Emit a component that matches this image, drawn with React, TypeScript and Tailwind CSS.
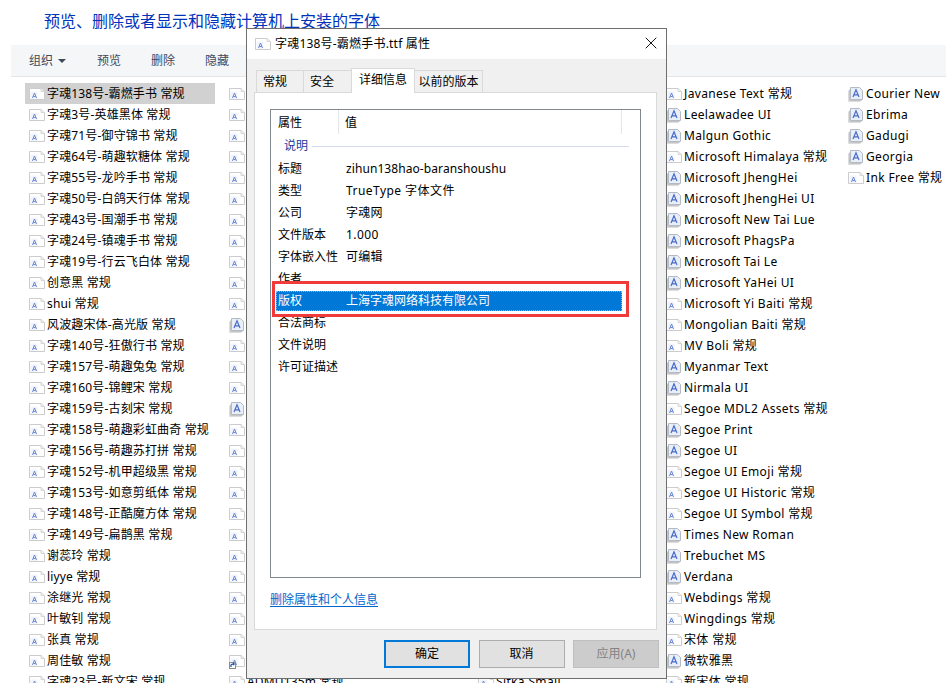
import { X } from "lucide-react";

type IconKind = "plain" | "stack" | "link" | "none";
type Item = { name: string; icon: IconKind; selected?: boolean };

const plain = (name: string): Item => ({ name, icon: "plain" });
const stack = (name: string): Item => ({ name, icon: "stack" });

const COL_ONE: Item[] = [
  { name: "字魂138号-霸燃手书 常规", icon: "plain", selected: true },
  ...[
    "字魂3号-英雄黑体 常规",
    "字魂71号-御守锦书 常规",
    "字魂64号-萌趣软糖体 常规",
    "字魂55号-龙吟手书 常规",
    "字魂50号-白鸽天行体 常规",
    "字魂43号-国潮手书 常规",
    "字魂24号-镇魂手书 常规",
    "字魂19号-行云飞白体 常规",
    "创意黑 常规",
    "shui 常规",
    "风波趣宋体-高光版 常规",
    "字魂140号-狂傲行书 常规",
    "字魂157号-萌趣兔兔 常规",
    "字魂160号-锦鲤宋 常规",
    "字魂159号-古刻宋 常规",
    "字魂158号-萌趣彩虹曲奇 常规",
    "字魂156号-萌趣苏打拼 常规",
    "字魂152号-机甲超级黑 常规",
    "字魂153号-如意剪纸体 常规",
    "字魂148号-正酷魔方体 常规",
    "字魂149号-扁鹊黑 常规",
    "谢蕊玲 常规",
    "liyye 常规",
    "涂继光 常规",
    "叶敏钊 常规",
    "张真 常规",
    "周佳敏 常规",
    "字魂23号-新文宋 常规",
  ].map(plain),
];

// second column sits behind the dialog, only its icons and last row show
const STACKED_COL_TWO = [11, 15];
const COL_TWO: Item[] = Array.from({ length: 29 }, (_, i) => {
  if (i === 27) return { name: "", icon: "link" as IconKind };
  if (i === 28) return plain("ADMU135m 常规");
  return { name: "", icon: STACKED_COL_TWO.includes(i) ? "stack" : "plain" };
});

const COL_THREE: Item[] = [
  plain("Javanese Text 常规"),
  stack("Leelawadee UI"),
  stack("Malgun Gothic"),
  plain("Microsoft Himalaya 常规"),
  stack("Microsoft JhengHei"),
  stack("Microsoft JhengHei UI"),
  stack("Microsoft New Tai Lue"),
  stack("Microsoft PhagsPa"),
  stack("Microsoft Tai Le"),
  stack("Microsoft YaHei UI"),
  plain("Microsoft Yi Baiti 常规"),
  plain("Mongolian Baiti 常规"),
  plain("MV Boli 常规"),
  stack("Myanmar Text"),
  stack("Nirmala UI"),
  plain("Segoe MDL2 Assets 常规"),
  stack("Segoe Print"),
  stack("Segoe UI"),
  plain("Segoe UI Emoji 常规"),
  plain("Segoe UI Historic 常规"),
  plain("Segoe UI Symbol 常规"),
  stack("Times New Roman"),
  stack("Trebuchet MS"),
  stack("Verdana"),
  plain("Webdings 常规"),
  plain("Wingdings 常规"),
  plain("宋体 常规"),
  stack("微软雅黑"),
  plain("新宋体 常规"),
];

const COL_FOUR: Item[] = [
  stack("Courier New"),
  stack("Ebrima"),
  stack("Gadugi"),
  stack("Georgia"),
  plain("Ink Free 常规"),
];

const PROPS = [
  { key: "标题", value: "zihun138hao-baranshoushu", tracking: "tracking-[0.08px]" },
  { key: "类型", value: "TrueType 字体文件", tracking: "tracking-[0.45px]" },
  { key: "公司", value: "字魂网", tracking: "tracking-[0.3px]" },
  { key: "文件版本", value: "1.000", tracking: "tracking-[0.45px]" },
  { key: "字体嵌入性", value: "可编辑", tracking: "tracking-[0.3px]" },
  { key: "作者", value: "", tracking: "" },
  { key: "版权", value: "上海字魂网络科技有限公司", tracking: "tracking-normal" },
  { key: "合法商标", value: "", tracking: "" },
  { key: "文件说明", value: "", tracking: "" },
  { key: "许可证描述", value: "", tracking: "" },
];

const FontIcon = ({ kind }: { kind: IconKind }) => {
  if (kind === "none") return <span className="w-4 h-4 shrink-0" />;
  if (kind === "stack") {
    return (
      <svg width="16" height="16" viewBox="0 0 16 16" className="shrink-0">
        <path d="M1.500 3.500v11h12" fill="none" stroke="#c4c4c4" />
        <path d="M0.500 4.500v11h12" fill="none" stroke="#dcdcdc" />
        <path d="M2.500 1.500h9l3 3v9h-12z" fill="#e8eff9" stroke="#b3bac4" />
        <path d="M5 11 L8 3.800 L11 11 M6.200 8.800h3.600" fill="none" stroke="#4a6ac8" strokeWidth="1.200" />
      </svg>
    );
  }
  return (
    <svg width="16" height="16" viewBox="0 0 16 16" className="shrink-0">
      <path d="M0.500 2.500h11.500l3.500 3v8h-15z" fill="#ffffff" stroke="#cccccc" />
      <path d="M12 2.500v3h3.500" fill="#f0f0f0" stroke="#d6d6d6" />
      <path d="M1.500 13h7V5.500h-7z" fill="#f0f4fb" />
      <path d="M3.500 12 L5.500 7 L7.500 12 M4.300 10.500h2.400" fill="none" stroke="#6d86d6" strokeWidth="1" />
      {kind === "link" && (
        <g>
          <rect x="0.500" y="9.500" width="6" height="6" fill="#ffffff" stroke="#8a8a8a" />
          <path d="M2 14 V12 Q2 11 3.500 11 H5 M3.800 10 L5.200 11 L3.800 12" fill="none" stroke="#1f4fa8" strokeWidth="1.200" />
        </g>
      )}
    </svg>
  );
};

const Column = ({ items, width, tracking }: { items: Item[]; width: string; tracking: string }) => (
  <ul className={`flex flex-col shrink-0 ${width}`}>
    {items.map((item, i) => (
      <li
        key={i}
        className={`h-[21px] flex items-center pl-1 whitespace-nowrap ${tracking} ${
          item.selected ? "bg-[#d1d1d1] w-[190px]" : ""
        }`}
      >
        <FontIcon kind={item.icon} />
        <span className="ml-0.5 text-black">{item.name}</span>
      </li>
    ))}
  </ul>
);

const DialogButton = ({ label, variant }: { label: string; variant: "primary" | "normal" | "disabled" }) => (
  <button
    className={`w-[86px] h-[28px] text-xs ${
      variant === "primary"
        ? "border-2 border-[#0078d7] bg-[#e1e1e1] text-black"
        : variant === "normal"
          ? "border border-[#adadad] bg-[#e1e1e1] text-black"
          : "border border-[#bfbfbf] bg-[#cccccc] text-[#838383]"
    }`}
  >
    {label}
  </button>
);

const PropertiesDialog = () => (
  <div className="absolute left-[246px] top-[28px] w-[421px] h-[651px] border border-[#6f6f6f] bg-[#f0f0f0] flex flex-col text-xs text-black">
    <div className="h-[30px] shrink-0 bg-white flex items-center pl-2 pr-[5px]">
      <FontIcon kind="plain" />
      <span className="ml-1 tracking-[0.2px]">字魂138号-霸燃手书.ttf 属性</span>
      <X className="ml-auto mb-[2px] w-5 h-5 text-black" strokeWidth={1.100} />
    </div>

    <div className="flex items-end pl-[9px] mt-[9px] h-[24px] shrink-0">
      <div className="w-[48px] h-[22px] flex items-center pl-[6px] border border-b-0 border-[#d9d9d9]">常规</div>
      <div className="w-[48px] h-[22px] flex items-center pl-[6px] border border-b-0 border-l-0 border-[#d9d9d9]">安全</div>
      <div className="w-[64px] h-[25px] flex items-center justify-center pb-[3px] bg-white border border-b-0 border-[#d9d9d9] relative z-10 -mb-px -ml-px">
        详细信息
      </div>
      <div className="w-[68px] h-[22px] flex items-center justify-center border border-b-0 border-l-0 border-[#d9d9d9]">以前的版本</div>
    </div>

    <div className="ml-[7px] mr-[9px] h-[538px] shrink-0 border border-[#d9d9d9] bg-white px-[15px] pt-[16px] flex flex-col">
      <div className="relative h-[469px] shrink-0 border border-[#828790] bg-white">
        <div className="flex h-[25px] items-center">
          <span className="w-[68px] pl-[7px] pt-[2px] self-stretch flex items-center border-r border-[#e5e5e5] mb-[1px]">属性</span>
          <span className="w-[283px] pl-[6px] pt-[2px] self-stretch flex items-center border-r border-[#e5e5e5] mb-[1px]">值</span>
        </div>
        <div className="flex items-center h-[23px] pb-px pl-[13px] text-[#1c3a9c]">
          <span>说明</span>
          <span className="ml-1 w-[317px] h-px bg-[#d5dcec]" />
        </div>
        {PROPS.map(({ key, value, tracking }) => {
          const selected = key === "版权";
          return (
            <div
              key={key}
              className={`h-[22px] flex items-center ml-[5px] w-[346px] ${selected ? "text-white" : ""}`}
            >
              <div
                className={`flex items-center w-full h-[20px] pl-[2px] ${
                  selected ? "bg-[#0078d7] outline-1 outline-dotted outline-[#7fbbeb] -outline-offset-1" : ""
                }`}
              >
                <span className="w-[68px] shrink-0">{key}</span>
                <span className={tracking}>{value}</span>
              </div>
            </div>
          );
        })}
        {/* red annotation round the copyright row */}
        <div className="absolute left-[1px] top-[171px] w-[357px] h-[36px] border-[3px] border-[#f03b3b] pointer-events-none" />
      </div>
      <a className="mt-[14px] text-[#0066cc] underline underline-offset-2">删除属性和个人信息</a>
    </div>

    <div className="flex justify-end gap-[8.500px] pr-[7px] mt-[10px]">
      <DialogButton label="确定" variant="primary" />
      <DialogButton label="取消" variant="normal" />
      <DialogButton label="应用(A)" variant="disabled" />
    </div>
  </div>
);

export default function App() {
  return (
    <div
      className="relative w-[946px] h-[683px] overflow-hidden bg-white text-xs"
      style={{ fontFamily: '"Noto Sans", "Noto Sans CJK SC", sans-serif' }}
    >
      <h1 className="h-[45px] pl-[44px] pt-[9px] text-base leading-6 font-normal text-[#0033bc] whitespace-nowrap">
        预览、删除或者显示和隐藏计算机上安装的字体
      </h1>

      <div className="ml-[11px] h-[32px] bg-[#f5f6f7] border-b border-[#e6e6e6] flex items-center text-[#3e4a5c]">
        <span className="ml-[18px]">组织</span>
        <span className="ml-[5px] w-0 h-0 border-x-4 border-t-4 border-x-transparent border-t-[#3e4a5c]" />
        <span className="ml-[31px]">预览</span>
        <span className="ml-[30px]">删除</span>
        <span className="ml-[30px]">隐藏</span>
      </div>

      <div className="flex pl-[25px] pt-[6px]">
        <Column items={COL_ONE} width="w-[200px]" tracking="tracking-[0.15px]" />
        <Column items={COL_TWO} width="w-[249px]" tracking="tracking-[0.15px]" />
        <Column
          items={[...Array.from({ length: 28 }, () => ({ name: "", icon: "none" as IconKind })), plain("Sitka Small")]}
          width="w-[188px]"
          tracking="tracking-[0.35px]"
        />
        <Column items={COL_THREE} width="w-[182px]" tracking="tracking-[0.35px]" />
        <Column items={COL_FOUR} width="w-[100px]" tracking="tracking-[0.35px]" />
      </div>

      <PropertiesDialog />
    </div>
  );
}
